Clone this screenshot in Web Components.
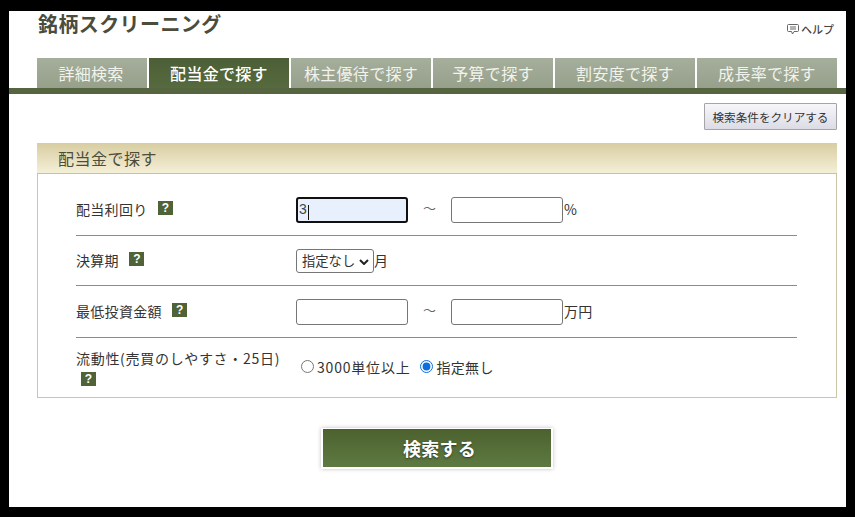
<!DOCTYPE html>
<html lang="ja">
<head>
<meta charset="utf-8">
<title>銘柄スクリーニング</title>
<style>
  html, body { margin: 0; padding: 0; background: #000; }
  body { font-family: "Noto Sans CJK JP", "Noto Sans", sans-serif; }
</style>
</head>
<body>
<screener-page>
  <screener-header slot="header" heading="銘柄スクリーニング"></screener-header>
  <screener-tabs slot="tabs">
    <screener-tab style="--tab-width:110px;--tab-pad:2px">詳細検索</screener-tab>
    <screener-tab active>配当金で探す</screener-tab>
    <screener-tab>株主優待で探す</screener-tab>
    <screener-tab style="--tab-width:120px">予算で探す</screener-tab>
    <screener-tab>割安度で探す</screener-tab>
    <screener-tab>成長率で探す</screener-tab>
  </screener-tabs>
  <clear-button slot="clear">検索条件をクリアする</clear-button>
  <search-panel slot="panel" heading="配当金で探す">
    <search-row pad-top="23" pad-bottom="12" style="--badge-gap:7px">
      配当利回り
      <range-field slot="field" unit="%" value="3" focused></range-field>
    </search-row>
    <search-row pad-top="13" pad-bottom="12" style="--badge-gap:7px">
      決算期
      <month-field slot="field"></month-field>
    </search-row>
    <search-row pad-top="13" pad-bottom="12" style="--badge-gap:7px">
      最低投資金額
      <range-field slot="field" unit="万円"></range-field>
    </search-row>
    <search-row pad-top="11" pad-bottom="11" last wrap-badge style="--label-spacing:.7px">
      流動性(売買のしやすさ・25日)
      <liquidity-field slot="field"></liquidity-field>
    </search-row>
  </search-panel>
  <search-button slot="submit">検索する</search-button>
</screener-page>

<script>
class ScreenerPage extends HTMLElement {
    connectedCallback() {
        this.attachShadow({ mode: 'open' });
        this.shadowRoot.innerHTML = `
            <style>
                :host { display: block; padding: 11px 9px 10px; height: 517px; box-sizing: border-box; }
                .sheet { background: #fff; height: 496px; display: flex; flex-direction: column; }
                .clear { display: flex; justify-content: flex-end; padding: 9px 9px 13px 0; }
                .panel { padding: 0 9px 0 28px; }
                .submit { display: flex; justify-content: center; padding: 30px 0 0 19px; }
            </style>
            <div class="sheet">
                <slot name="header"></slot>
                <slot name="tabs"></slot>
                <div class="clear"><slot name="clear"></slot></div>
                <div class="panel"><slot name="panel"></slot></div>
                <div class="submit"><slot name="submit"></slot></div>
            </div>
        `;
    }
}

class ScreenerHeader extends HTMLElement {
    connectedCallback() {
        this.attachShadow({ mode: 'open' });
        this.shadowRoot.innerHTML = `
            <style>
                :host { display: flex; justify-content: space-between; height: 47px; padding: 0 12px 0 29px; }
                h1 { margin: 0; font-size: 20px; line-height: 26px; font-weight: 700; color: #4c4c3c; letter-spacing: .4px; }
                .help { display: flex; align-items: center; gap: 2px; height: 14px; margin-top: 11px; font-size: 11px; font-weight: 500; color: #444; }
                svg { display: block; }
            </style>
            <h1>${this.getAttribute('heading')}</h1>
            <div class="help">
                <svg width="12" height="12" viewBox="0 0 12 12" fill="none" stroke="#666" stroke-width="1">
                    <path d="M1.5 1.5h9a1 1 0 0 1 1 1v5a1 1 0 0 1-1 1H7L5.500 11 4.500 8.500H1.500a1 1 0 0 1-1-1v-5a1 1 0 0 1 1-1z"/>
                    <path d="M3 4h6M3 6h6"/>
                </svg>
                <span>ヘルプ</span>
            </div>
        `;
    }
}

class ScreenerTabs extends HTMLElement {
    connectedCallback() {
        this.attachShadow({ mode: 'open' });
        this.shadowRoot.innerHTML = `
            <style>
                :host { display: block; border-bottom: 6px solid #556540; padding-left: 28px; }
                .row { display: flex; gap: 2px; }
            </style>
            <div class="row"><slot></slot></div>
        `;
    }
}

class ScreenerTab extends HTMLElement {
    connectedCallback() {
        this.attachShadow({ mode: 'open' });
        this.shadowRoot.innerHTML = `
            <style>
                :host { display: block; box-sizing: border-box; width: var(--tab-width, 140px); height: 30px; line-height: 30px; text-align: center;
                    padding-right: var(--tab-pad, 0); font-size: 16px; letter-spacing: .3px; color: #f1f3ec;
                    background: linear-gradient(#a6ae9c, #96a08a); }
                :host([active]) { color: #fff; font-weight: 500; background: linear-gradient(#4c5e36, #566a3e); }
            </style>
            <slot></slot>
        `;
    }
}

class ClearButton extends HTMLElement {
    connectedCallback() {
        this.attachShadow({ mode: 'open' });
        this.shadowRoot.innerHTML = `
            <style>
                :host { display: block; }
                button { display: block; width: 133px; height: 27px; padding: 0; font-family: inherit; font-size: 11.6px; color: #333;
                    border: 1px solid #a5a5a8; border-radius: 1px; background: linear-gradient(#f6f6fa, #dcdce6); }
            </style>
            <button type="button"><slot></slot></button>
        `;
    }
}

class SearchPanel extends HTMLElement {
    connectedCallback() {
        this.attachShadow({ mode: 'open' });
        this.shadowRoot.innerHTML = `
            <style>
                :host { display: block; border: 1px solid #c9c7a6; border-top: 0; }
                h2 { margin: 0 -1px; height: 31px; box-sizing: border-box; padding-left: 21px; line-height: 31px;
                    font-size: 16px; font-weight: 400; letter-spacing: .5px; color: #4c4c38;
                    background: linear-gradient(#d8cda2, #f4efd7); border-bottom: 1px solid #c9c29a; }
                .body { padding: 0 39px 0 38px; }
            </style>
            <h2>${this.getAttribute('heading')}</h2>
            <div class="body"><slot></slot></div>
        `;
    }
}

class SearchRow extends HTMLElement {
    connectedCallback() {
        const top = this.getAttribute('pad-top');
        const bottom = this.getAttribute('pad-bottom');
        this.attachShadow({ mode: 'open' });
        this.shadowRoot.innerHTML = `
            <style>
                :host { display: block; border-bottom: 1px solid #8c8c8c; }
                :host([last]) { border-bottom: 0; }
                .row { display: grid; grid-template-columns: 220px 1fr; align-items: center; padding: ${top}px 0 ${bottom}px; }
                .label { font-size: 14px; line-height: 19px; letter-spacing: var(--label-spacing, .3px); color: #333; display: block; padding-bottom: 2px; }
                :host([wrap-badge]) .label { padding-bottom: 0; }
                help-badge { margin-left: var(--badge-gap, 0); }
                :host([wrap-badge]) help-badge { display: block; margin: 4px 0 0 5px; }
            </style>
            <div class="row">
                <div class="label"><slot></slot><help-badge></help-badge></div>
                <slot name="field"></slot>
            </div>
        `;
    }
}

class HelpBadge extends HTMLElement {
    connectedCallback() {
        this.attachShadow({ mode: 'open' });
        this.shadowRoot.innerHTML = `
            <style>
                :host { display: inline-block; vertical-align: 3px; }
                span { display: block; width: 15px; height: 14px; text-align: center; background: #4f6238;
                    color: #fff; font: 700 12px/14px "Liberation Sans", sans-serif; letter-spacing: 0; }
            </style>
            <span>?</span>
        `;
    }
}

class RangeField extends HTMLElement {
    connectedCallback() {
        const value = this.getAttribute('value') || '';
        const focused = this.hasAttribute('focused');
        this.attachShadow({ mode: 'open' });
        this.shadowRoot.innerHTML = `
            <style>
                :host { display: flex; align-items: center; font-size: 14px; letter-spacing: .2px; color: #333; }
                .box { position: relative; display: block; }
                input { display: block; box-sizing: border-box; width: 112px; height: 26px; padding: 0 2px 2px; margin: 0;
                    font: 14px "Liberation Sans", sans-serif; color: #444; background: #fff;
                    border: 1px solid #767676; border-radius: 3px; outline: 0; }
                input.focused { background: #e8f0fe; border: 2px solid #101010; padding: 0 1px 2px; }
                .caret { position: absolute; left: 12px; top: 8px; width: 1px; height: 15px; background: #111; }
                .tilde { width: 43px; text-align: center; font-size: 13px; color: #666; padding-bottom: 5px; }
                .unit { padding: 0 0 3px 1px; }
            </style>
            <span class="box">
                <input type="text" value="${value}" class="${focused ? 'focused' : ''}">
                ${focused ? '<i class="caret"></i>' : ''}
            </span>
            <span class="tilde">～</span>
            <span class="box"><input type="text"></span>
            <span class="unit">${this.getAttribute('unit')}</span>
        `;
    }
}

class MonthField extends HTMLElement {
    connectedCallback() {
        this.attachShadow({ mode: 'open' });
        this.shadowRoot.innerHTML = `
            <style>
                :host { display: flex; align-items: center; font-size: 14px; color: #333; }
                .box { position: relative; display: block; }
                select { display: block; appearance: none; box-sizing: border-box; width: 78px; height: 24px; margin: 0; padding: 0 0 1px 5px;
                    font: 13.3px "Noto Sans CJK JP", sans-serif; color: #333;
                    background: #fff; border: 1px solid #767676; border-radius: 3px; }
                svg { position: absolute; left: 63px; top: 10px; pointer-events: none; }
                .unit { padding-bottom: 2px; }
            </style>
            <span class="box">
                <select><option>指定なし</option></select>
                <svg width="10" height="6" viewBox="0 0 10 6" fill="none" stroke="#222" stroke-width="2"><path d="M1 1l4 4 4-4"/></svg>
            </span>
            <span class="unit">月</span>
        `;
    }
}

class LiquidityField extends HTMLElement {
    connectedCallback() {
        this.attachShadow({ mode: 'open' });
        this.shadowRoot.innerHTML = `
            <style>
                :host { display: flex; align-items: center; font-size: 14px; color: #333; padding: 0 0 2px 5px; }
                label { display: flex; align-items: center; letter-spacing: .3px; }
                label.wide { letter-spacing: .8px; }
                label + label { margin-left: 10px; }
                input { width: 13px; height: 13px; margin: 0 3px 0 0; accent-color: #0b6fe0; }
            </style>
            <label class="wide"><input type="radio" name="liq">3000単位以上</label>
            <label><input type="radio" name="liq" checked>指定無し</label>
        `;
    }
}

class SearchButton extends HTMLElement {
    connectedCallback() {
        this.attachShadow({ mode: 'open' });
        this.shadowRoot.innerHTML = `
            <style>
                :host { display: block; }
                button { display: block; box-sizing: border-box; width: 232px; height: 41px; padding: 0 0 0 5px; font-family: inherit;
                    font-size: 18px; font-weight: 700; letter-spacing: .3px; color: #fff; text-shadow: 0 1px 2px rgba(0,0,0,.5);
                    border: 2px solid #fff; border-top-width: 1px; background: linear-gradient(#4c612f, #5e7a42);
                    box-shadow: 0 0 4px rgba(0,0,0,.25); }
            </style>
            <button type="button"><slot></slot></button>
        `;
    }
}

customElements.define('screener-page', ScreenerPage);
customElements.define('screener-header', ScreenerHeader);
customElements.define('screener-tabs', ScreenerTabs);
customElements.define('screener-tab', ScreenerTab);
customElements.define('clear-button', ClearButton);
customElements.define('search-panel', SearchPanel);
customElements.define('search-row', SearchRow);
customElements.define('help-badge', HelpBadge);
customElements.define('range-field', RangeField);
customElements.define('month-field', MonthField);
customElements.define('liquidity-field', LiquidityField);
customElements.define('search-button', SearchButton);
</script>
</body>
</html>
